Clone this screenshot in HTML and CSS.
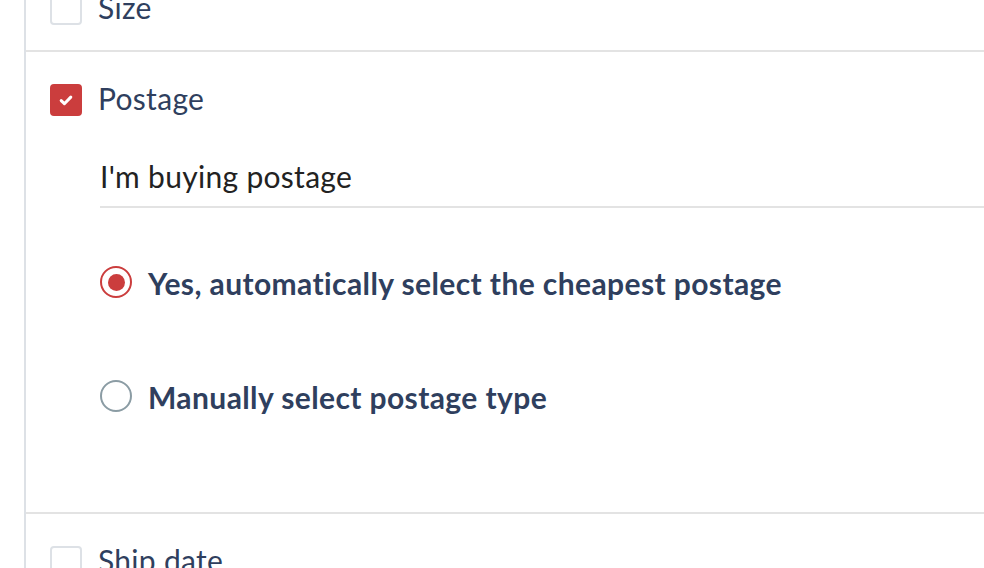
FILE: index.html
```html
<!DOCTYPE html>
<html lang="en">
<head>
    <meta charset="UTF-8">
    <meta name="viewport" content="width=device-width, initial-scale=1.0">
    <title>Shipping filters</title>
    <link rel="stylesheet" href="styles.css">
</head>
<body>
    <div class="panel">
        <div class="row collapsed">
            <label class="check-line">
                <span class="box"></span>
                <span class="label">Size</span>
            </label>
        </div>
        <div class="row open">
            <label class="check-line">
                <span class="box checked">
                    <svg viewBox="0 0 16 16" width="16" height="16"><path d="M3.2 8.6l3.2 3.1 6.4-6.6" fill="none" stroke="#fff" stroke-width="3" stroke-linecap="round" stroke-linejoin="round"/></svg>
                </span>
                <span class="label">Postage</span>
            </label>
            <div class="sub">
                <div class="field">I'm buying postage</div>
                <div class="radios">
                    <label class="radio-line">
                        <span class="radio on"></span>
                        <span class="radio-label">Yes, automatically select the cheapest postage</span>
                    </label>
                    <label class="radio-line">
                        <span class="radio"></span>
                        <span class="radio-label">Manually select postage type</span>
                    </label>
                </div>
            </div>
        </div>
        <div class="row collapsed">
            <label class="check-line">
                <span class="box"></span>
                <span class="label">Ship date</span>
            </label>
        </div>
    </div>
</body>
</html>
```

FILE: styles.css
```css
body {
    margin: 0;
    background: #fff;
    font-family: Lato, "Open Sans", sans-serif;
    overflow: hidden;
}
.panel {
    margin-left: 24px;
    margin-top: -39px;
    border-left: 2px solid #dde1e6;
}
.row {
    padding: 32px 0 25px 24px;
    border-bottom: 2px solid #e3e3e3;
}
.row.open {
    padding-bottom: 100px;
}
.check-line {
    display: flex;
    align-items: center;
    gap: 16px;
    height: 32px;
}
.box {
    width: 28px;
    height: 28px;
    border: 2px solid #dde1e6;
    border-radius: 4px;
    display: flex;
    align-items: center;
    justify-content: center;
    flex-shrink: 0;
}
.box.checked {
    background: #cb3d3d;
    border-color: #cb3d3d;
}
.label {
    font-size: 30px;
    letter-spacing: 0.3px;
    color: #2f3f5e;
    margin-bottom: 5px;
}
.sub {
    margin-left: 50px;
}
.field {
    font-size: 30px;
    letter-spacing: 0.3px;
    color: #222;
    padding: 40px 0 10px;
    border-bottom: 2px solid #e3e3e3;
    line-height: 40px;
}
.radios {
    display: flex;
    flex-direction: column;
    gap: 82px;
    margin-top: 58px;
}
.radio-line {
    display: flex;
    align-items: center;
    gap: 16px;
    height: 32px;
}
.radio {
    width: 28px;
    height: 28px;
    border: 2px solid #8b9ca4;
    border-radius: 50%;
    display: flex;
    align-items: center;
    justify-content: center;
    flex-shrink: 0;
}
.radio.on {
    border-color: #cb3d3d;
}
.radio.on::after {
    content: "";
    width: 17px;
    height: 17px;
    border-radius: 50%;
    background: #cb3d3d;
}
.radio-label {
    font-size: 30px;
    font-weight: 700;
    letter-spacing: 0.4px;
    color: #2f3f5e;
    margin-top: 2px;
}
```
